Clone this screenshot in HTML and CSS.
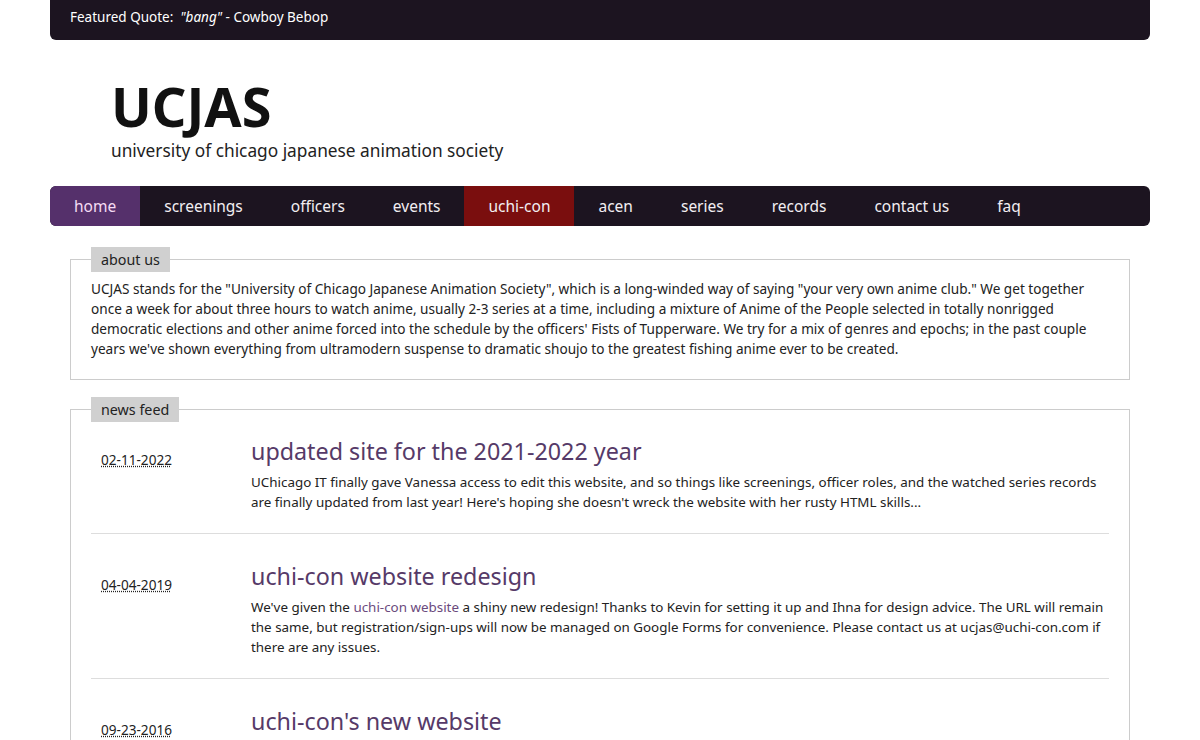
FILE: index.html
```html
<!DOCTYPE html>
<html lang="en">
<head>
    <meta charset="UTF-8">
    <title>UCJAS</title>
    <link rel="stylesheet" href="styles.css">
</head>
<body>
    <div id="wrap">
        <div id="quote">Featured Quote: &nbsp;<em>"bang"</em> - Cowboy Bebop</div>

        <div id="header">
            <h1>UCJAS</h1>
            <h3>university of chicago japanese animation society</h3>
        </div>

        <ul id="nav">
            <li class="current"><a href="#">home</a></li>
            <li><a href="#">screenings</a></li>
            <li><a href="#">officers</a></li>
            <li><a href="#">events</a></li>
            <li class="con"><a href="#">uchi-con</a></li>
            <li><a href="#">acen</a></li>
            <li><a href="#">series</a></li>
            <li><a href="#">records</a></li>
            <li><a href="#">contact us</a></li>
            <li><a href="#">faq</a></li>
        </ul>

        <fieldset class="box about">
            <legend>about us</legend>
            <p>UCJAS stands for the "University of Chicago Japanese Animation Society", which is a long-winded way of saying "your very own anime club." We get together once a week for about three hours to watch anime, usually 2-3 series at a time, including a mixture of Anime of the People selected in totally nonrigged democratic elections and other anime forced into the schedule by the officers' Fists of Tupperware. We try for a mix of genres and epochs; in the past couple years we've shown everything from ultramodern suspense to dramatic shoujo to the greatest fishing anime ever to be created.</p>
        </fieldset>

        <fieldset class="box news">
            <legend>news feed</legend>

            <div class="entry">
                <div class="date"><abbr title="February 11, 2022">02-11-2022</abbr></div>
                <div class="post">
                    <h2>updated site for the 2021-2022 year</h2>
                    <p>UChicago IT finally gave Vanessa access to edit this website, and so things like screenings, officer roles, and the watched series records are finally updated from last year! Here's hoping she doesn't wreck the website with her rusty HTML skills...</p>
                </div>
            </div>

            <div class="entry">
                <div class="date"><abbr title="April 4, 2019">04-04-2019</abbr></div>
                <div class="post">
                    <h2>uchi-con website redesign</h2>
                    <p>We've given the <a href="#">uchi-con website</a> a shiny new redesign! Thanks to Kevin for setting it up and Ihna for design advice. The URL will remain the same, but registration/sign-ups will now be managed on Google Forms for convenience. Please contact us at ucjas@uchi-con.com if there are any issues.</p>
                </div>
            </div>

            <div class="entry">
                <div class="date"><abbr title="September 23, 2016">09-23-2016</abbr></div>
                <div class="post">
                    <h2>uchi-con's new website</h2>
                    <p>uchi-con now has its own website! Check it out for the schedule, guests and everything else about the convention.</p>
                </div>
            </div>
        </fieldset>
    </div>
</body>
</html>
```

FILE: styles.css
```css
body, html {
    margin: 0;
    padding: 0;
    background-color: #fff;
    color: #222;
    font-family: 'Noto Sans', 'Open Sans', sans-serif;
}

#wrap {
    width: 1100px;
    margin: 0 auto;
}

#quote {
    background-color: #1c1420;
    color: #fff;
    font-size: 13.5px;
    line-height: 20px;
    padding: 7px 20px 13px;
    border-radius: 0 0 6px 6px;
}

#header {
    padding: 36px 61px 23px;
}

#header h1 {
    font-size: 54px;
    line-height: 60px;
    font-weight: bold;
    margin: 0;
    color: #111;
}

#header h3 {
    font-size: 17.3px;
    font-weight: normal;
    line-height: 24px;
    margin: 3px 0 0;
    color: #222;
}

#nav {
    display: flex;
    list-style: none;
    margin: 0 0 21px;
    padding: 0;
    height: 40px;
    background-color: #1c1420;
    border-radius: 6px;
    overflow: hidden;
}

#nav a {
    display: block;
    padding: 0 24px;
    line-height: 40px;
    font-size: 15.5px;
    color: #f2eef2;
    text-decoration: none;
}

#nav .current {
    background-color: #55306b;
}

#nav .current a {
    color: #f6dcf4;
}

#nav .con {
    background-color: #7a0e0e;
}

.box {
    margin: 0 20px 17px;
    padding: 0 20px 20px;
    border: 1px solid #ccc;
}

.box legend {
    background-color: #d0d0d0;
    padding: 0 10px;
    line-height: 25px;
    font-size: 14.3px;
    color: #222;
}

.box p {
    margin: 0;
    font-size: 13.6px;
    line-height: 20px;
}

.about {
    padding-top: 7px;
}

.entry {
    display: grid;
    grid-template-columns: 160px 1fr;
    padding: 27px 0 21px;
    border-bottom: 1px solid #ddd;
}

.entry:first-of-type {
    padding-top: 14px;
}

.date {
    padding: 14px 0 0 10px;
    font-size: 13.6px;
    line-height: 20px;
}

.date abbr {
    text-decoration: underline dotted;
}

.post h2 {
    margin: 0 0 6px;
    font-size: 23.3px;
    line-height: 30px;
    font-weight: normal;
    color: #563a68;
}

.post p {
    font-size: 13.4px;
}

.post a {
    color: #6b4a7d;
    text-decoration: none;
}
```
